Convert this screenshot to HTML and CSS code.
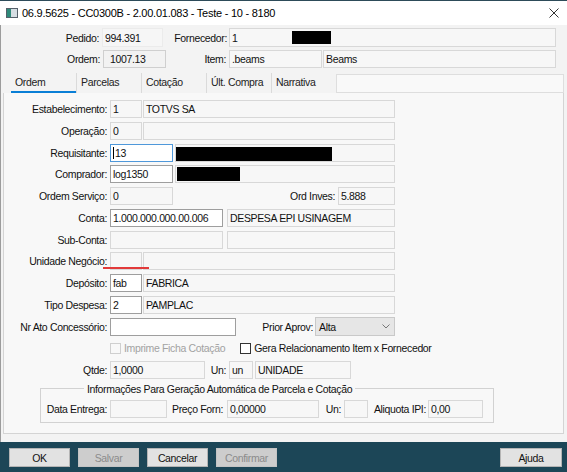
FILE: index.html
```html
<!DOCTYPE html>
<html lang="pt-BR">
<head>
<meta charset="utf-8">
<title>Ordem de Compra</title>
<link rel="stylesheet" href="styles.css">
</head>
<body>
<div class="window">
  <header class="titlebar">
    <svg class="app-icon" viewBox="0 0 12 10" width="12" height="10">
      <rect x="0.5" y="0.5" width="11" height="9" fill="#d6dee3" stroke="#55606a"/>
      <rect x="1" y="1" width="4" height="8" fill="#2f8a7a"/>
    </svg>
    <span class="title">06.9.5625 - CC0300B - 2.00.01.083 - Teste - 10 - 8180</span>
    <svg class="close" viewBox="0 0 10 10" width="10" height="10">
      <path d="M0.5 0.5 L9.5 9.5 M9.5 0.5 L0.5 9.5" stroke="#333" stroke-width="1" fill="none"/>
    </svg>
  </header>

  <div class="client">
    <div class="hrow tall">
      <span class="lbl w99">Pedido:</span>
      <span class="fld flat w61">994.391</span>
      <span class="lbl w66 pr2">Fornecedor:</span>
      <span class="fld w327">1<span class="redact r-forn"></span></span>
    </div>
    <div class="hrow gap3">
      <span class="lbl w100">Ordem:</span>
      <span class="fld shade w63 pl6">1007.13</span>
      <span class="lbl w63">Item:</span>
      <span class="fld w93">.beams</span>
      <span class="fld w233 ml1">Beams</span>
    </div>

    <nav class="tabs">
      <span class="tab active">Ordem</span>
      <span class="tab">Parcelas</span>
      <span class="tab">Cotação</span>
      <span class="tab">Últ. Compra</span>
      <span class="tab">Narrativa</span>
      <span class="tab-fill"></span>
    </nav>

    <section class="panel">
      <div class="row">
        <span class="lbl w106">Estabelecimento:</span>
        <span class="fld w32">1</span>
        <span class="fld w252 ml1">TOTVS SA</span>
      </div>
      <div class="row">
        <span class="lbl w106">Operação:</span>
        <span class="fld w32">0</span>
        <span class="fld w252 ml1"></span>
      </div>
      <div class="row">
        <span class="lbl w106">Requisitante:</span>
        <span class="fld focus w63"><span class="caret"></span>13</span>
        <span class="fld bare w220 ml2"><span class="redact r-req"></span></span>
      </div>
      <div class="row">
        <span class="lbl w106">Comprador:</span>
        <span class="fld edit w63">log1350</span>
        <span class="fld bare w220 ml2"><span class="redact r-comp"></span></span>
      </div>
      <div class="row">
        <span class="lbl w106">Ordem Serviço:</span>
        <span class="fld w63">0</span>
        <span class="lbl w165">Ord Inves:</span>
        <span class="fld w57">5.888</span>
      </div>
      <div class="row">
        <span class="lbl w106">Conta:</span>
        <span class="fld edit w113">1.000.000.000.00.006</span>
        <span class="fld w168 ml4">DESPESA EPI USINAGEM</span>
      </div>
      <div class="row">
        <span class="lbl w106">Sub-Conta:</span>
        <span class="fld w113"></span>
        <span class="fld w168 ml4"></span>
      </div>
      <div class="row marked">
        <span class="lbl w106">Unidade Negócio:</span>
        <span class="fld w32"></span>
        <span class="fld w252 ml1"></span>
        <span class="required-mark"></span>
      </div>
      <div class="row">
        <span class="lbl w106">Depósito:</span>
        <span class="fld edit w32">fab</span>
        <span class="fld w252 ml1">FABRICA</span>
      </div>
      <div class="row">
        <span class="lbl w106">Tipo Despesa:</span>
        <span class="fld edit w32">2</span>
        <span class="fld w252 ml1">PAMPLAC</span>
      </div>
      <div class="row">
        <span class="lbl w106">Nr Ato Concessório:</span>
        <span class="fld edit w126"></span>
        <span class="lbl w79 pr2">Prior Aprov:</span>
        <span class="select">
          <span>Alta</span>
          <svg viewBox="0 0 8 5" width="8" height="5"><path d="M0.5 0.5 L4 4 L7.5 0.5" stroke="#777" fill="none"/></svg>
        </span>
      </div>
      <div class="row">
        <span class="w106"></span>
        <span class="check disabled"></span>
        <span class="check-text muted">Imprime Ficha Cotação</span>
        <span class="check on-gap"></span>
        <span class="check-text">Gera Relacionamento Item x Fornecedor</span>
      </div>
      <div class="row">
        <span class="lbl w106">Qtde:</span>
        <span class="fld w95">1,0000</span>
        <span class="lbl w24">Un:</span>
        <span class="fld w24">un</span>
        <span class="fld w96 ml2">UNIDADE</span>
      </div>

      <fieldset class="group">
        <legend>Informações Para Geração Automática de Parcela e Cotação</legend>
        <div class="row">
          <span class="lbl w69">Data Entrega:</span>
          <span class="fld w57"></span>
          <span class="lbl w60 pr4">Preço Forn:</span>
          <span class="fld w92">0,00000</span>
          <span class="lbl w25">Un:</span>
          <span class="fld w24"></span>
          <span class="lbl w60 pr2">Aliquota IPI:</span>
          <span class="fld w55">0,00</span>
        </div>
      </fieldset>
    </section>
  </div>

  <footer class="actions">
    <button class="btn">OK</button>
    <button class="btn" disabled>Salvar</button>
    <button class="btn">Cancelar</button>
    <button class="btn" disabled>Confirmar</button>
    <button class="btn help">Ajuda</button>
  </footer>
</div>
</body>
</html>
```
FILE: styles.css
```css
* { box-sizing: border-box; }

html, body {
  margin: 0;
  padding: 0;
}

body {
  width: 567px;
  height: 472px;
  overflow: hidden;
  background: #f3f3f3;
  color: #111;
  font-family: "Liberation Sans", Arial, sans-serif;
  font-size: 10.5px;
  letter-spacing: -0.35px;
}

.window {
  display: flex;
  flex-direction: column;
  height: 472px;
}

/* ---- title bar ---- */
.titlebar {
  flex: none;
  height: 25px;
  display: flex;
  align-items: center;
  padding-left: 6px;
  background: #fff;
  border-top: 1px solid #2d4b59;
}

.app-icon { flex: none; margin-right: 4px; }

.title {
  font-size: 11px;
  letter-spacing: -0.25px;
  color: #000;
}

.close { margin-left: auto; margin-right: 8px; }

/* ---- client area ---- */
.client {
  flex: 1;
  display: flex;
  flex-direction: column;
  padding: 3px 0 8px 2px;
  border-left: 1px solid #9c9c9c;
}

.hrow {
  display: flex;
  align-items: center;
  height: 18px;
}
.hrow.tall { height: 19px; }
.hrow.gap3 { margin-top: 3px; }

.lbl {
  flex: none;
  text-align: right;
  padding-right: 3px;
  white-space: nowrap;
}
.pr2 { padding-right: 2px; }
.pr4 { padding-right: 4px; }

.fld {
  flex: none;
  display: flex;
  align-items: center;
  height: 18px;
  padding: 0 2px;
  border: 1px solid #d8d8d8;
  background: #f7f7f7;
  white-space: nowrap;
  overflow: hidden;
}
.hrow.tall .fld { height: 19px; }
.fld.flat { border-color: #ebebeb; background: #f6f6f6; }
.fld.shade { border-color: #cfcfcf; background: #f2f2f2; }
.fld.edit { background: #fff; border-color: #9e9e9e; }
.fld.focus { background: #fff; border-color: #4f98da; }
.fld.bare { padding: 0; align-items: flex-start; }
.pl6 { padding-left: 6px; }

.caret {
  width: 1px;
  height: 12px;
  background: #000;
  margin-right: 1px;
}

.redact { display: block; background: #000; }
.r-forn { width: 39px; height: 13px; margin-left: 54px; }
.r-req { width: 156px; height: 16px; margin-top: 2px; }
.r-comp { width: 63px; height: 14px; margin-top: 1px; margin-left: 1px; }

/* widths */
.w24 { width: 24px; }
.w25 { width: 25px; }
.w32 { width: 32px; }
.w55 { width: 55px; }
.w57 { width: 57px; }
.w60 { width: 60px; }
.w61 { width: 61px; }
.w63 { width: 63px; }
.w66 { width: 66px; }
.w69 { width: 69px; }
.w79 { width: 79px; }
.w92 { width: 92px; }
.w93 { width: 93px; }
.w95 { width: 95px; }
.w96 { width: 96px; }
.w99 { width: 99px; }
.w100 { width: 100px; }
.w106 { width: 106px; flex: none; }
.w113 { width: 113px; }
.w126 { width: 126px; }
.w165 { width: 165px; }
.w168 { width: 168px; }
.w220 { width: 220px; }
.w233 { width: 233px; }
.w252 { width: 252px; }
.w327 { width: 327px; }
.ml1 { margin-left: 1px; }
.ml2 { margin-left: 2px; }
.ml4 { margin-left: 4px; }

/* ---- tabs ---- */
.tabs {
  flex: none;
  display: flex;
  height: 20px;
  margin: 5px 3px 0 8px;
}

.tab {
  flex: none;
  width: 65px;
  padding-left: 4px;
  line-height: 19px;
  color: #222;
}
.tab + .tab { border-left: 1px solid #dadada; }
.tab.active { box-shadow: inset 0 -2px #0a7fd6; }

.tab-fill {
  flex: 1;
  margin-top: 1px;
  border: 1px solid #dedede;
  background: #f9f9f9;
}

/* ---- tab page ---- */
.panel {
  flex: none;
  height: 341px;
  margin-right: 3px;
  padding-top: 7px;
  display: flex;
  flex-direction: column;
  gap: 3.75px;
  border: 1px solid #d4d4d4;
  border-top: 0;
  background: #f8f8f8;
}

.row {
  display: flex;
  align-items: center;
  height: 18px;
}
.row.marked { position: relative; }

.required-mark {
  position: absolute;
  left: 99px;
  top: 15px;
  width: 46px;
  height: 2px;
  background: #e23a3a;
}

.select {
  flex: none;
  width: 80px;
  height: 19px;
  display: flex;
  align-items: center;
  justify-content: space-between;
  padding: 0 4px 0 3px;
  border: 1px solid #c9c9c9;
  background: #e6e6e6;
}

.check {
  flex: none;
  width: 11px;
  height: 11px;
  border: 1px solid #333;
  background: #fff;
}
.check.disabled { border-color: #cfcfcf; background: #f8f8f8; }
.check.on-gap { margin-left: 15px; }
.check-text { margin-left: 3px; white-space: nowrap; }
.muted { color: #a2a2a2; }

/* ---- group box ---- */
.group {
  margin: 0 0 0 36px;
  padding: 5px 0 4px 0;
  width: 454px;
  min-width: 0;
  border: 1px solid #d2d2d2;
}
.group legend {
  margin-left: 43px;
  padding: 0 3px;
  line-height: 12px;
}

/* ---- bottom button bar ---- */
.actions {
  flex: none;
  height: 30px;
  display: flex;
  align-items: flex-start;
  gap: 8px;
  padding: 6px 5px 0 9px;
  background: #1c4657;
}

.btn {
  width: 61px;
  height: 19px;
  padding: 0;
  border: 1px solid #b4b4b4;
  background: #e2e2e2;
  color: #111;
  font: inherit;
  letter-spacing: inherit;
  text-align: center;
}
.btn:disabled { background: #cdcdcd; border-color: #c4c4c4; color: #8b8b8b; }
.btn.help { margin-left: auto; width: 62px; }
```
